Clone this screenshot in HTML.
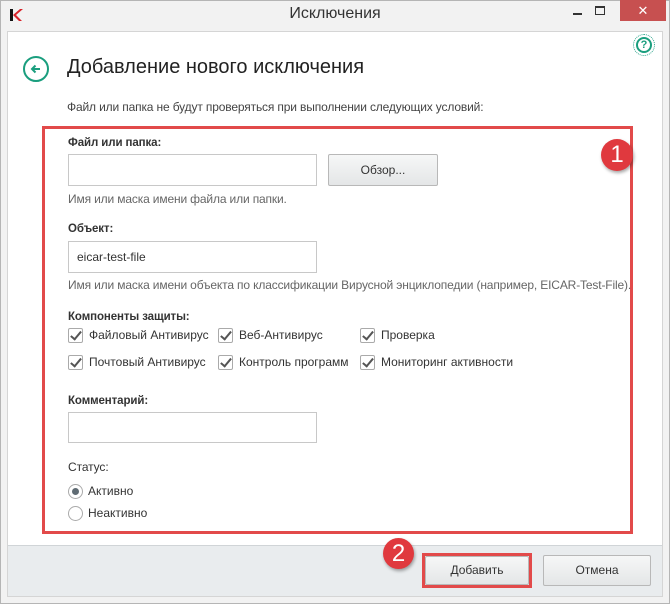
<!DOCTYPE html>
<html><head><meta charset="utf-8"><style>
*{box-sizing:border-box;margin:0;padding:0}
body{width:670px;height:604px;background:#f3f3f3;font-family:"Segoe UI","Liberation Sans",sans-serif;color:#333;position:relative;overflow:hidden;font-size:12px}
.a{position:absolute}
.win{left:0;top:0;width:670px;height:604px;border:1px solid #b5b5b5;background:#f2f2f2}
.content{left:7px;top:31px;width:656px;height:514px;background:#fff;border:1px solid #d5d5d5;border-bottom:none}
.footer{left:7px;top:545px;width:656px;height:52px;background:#e9ecee;border:1px solid #d5d5d5;border-top:1px solid #d0d4d7}
.lbl{font-weight:bold;font-size:11.5px;color:#333;letter-spacing:-0.1px}
.hint{font-size:12px;color:#666;letter-spacing:-0.15px}
.inp{background:#fff;border:1px solid #c8c8c8;height:32px;width:249px}
.btn{border:1px solid #b8b8b8;background:linear-gradient(#f6f7f7,#e4e6e7);text-align:center;font-size:12px;color:#333;line-height:30px;border-radius:2px}
.cb{width:15px;height:15px;border:1px solid #aaa;background:#fff;border-radius:2px}
.cb:after{content:"";position:absolute;left:4px;top:0px;width:4px;height:9px;border:solid #555;border-width:0 2px 2px 0;transform:rotate(40deg)}
.ct{font-size:12px;color:#333}
.badge{border-radius:50%;background:#e0393e;color:#fff;text-align:center;font-size:24px;box-shadow:1px 2px 3px rgba(0,0,0,.35)}
</style></head><body>
<div class="a win"></div>
<div class="a" style="left:9px;top:8px;width:14px;height:14px">
<svg width="14" height="14"><path d="M1 1h3v12H1z" fill="#111"/><path d="M4 7L11 1h3L7 7l6 6h-3z" fill="#d8232a"/></svg></div>
<div class="a" style="left:0;top:5px;width:670px;text-align:center;font-size:16px;color:#333">Исключения</div>
<div class="a" style="left:573px;top:13px;width:9px;height:2px;background:#333"></div>
<div class="a" style="left:595px;top:6px;width:10px;height:9px;border:1px solid #333;border-top-width:2px"></div>
<div class="a" style="left:620px;top:0;width:46px;height:21px;background:#c75050;color:#fff;text-align:center;font-size:13px;line-height:21px">✕</div>
<div class="a content"></div>
<div class="a footer"></div>
<div class="a" style="left:633px;top:34px;width:22px;height:22px;border:1px dotted #2aa38a;border-radius:50%"></div>
<div class="a" style="left:636px;top:37px;width:16px;height:16px;border:2px solid #1a9e7e;border-radius:50%;color:#1a9e7e;font-weight:bold;font-size:11px;text-align:center;line-height:12px">?</div>
<div class="a" style="left:23px;top:56px;width:26px;height:26px;border:2px solid #1a9e7e;border-radius:50%"></div>
<svg class="a" style="left:28px;top:61px" width="16" height="16"><path d="M12 8H4M7.5 4.5L4 8l3.5 3.5" stroke="#1a9e7e" stroke-width="2" fill="none"/></svg>
<div class="a" style="left:67px;top:56px;font-size:20px;color:#222">Добавление нового исключения</div>
<div class="a hint" style="left:67px;top:100px;color:#444">Файл или папка не будут проверяться при выполнении следующих условий:</div>
<div class="a" style="left:42px;top:126px;width:591px;height:408px;border:3px solid #e24a4a"></div>
<div class="a lbl" style="left:68px;top:137px">Файл или папка:</div>
<div class="a inp" style="left:68px;top:154px"></div>
<div class="a btn" style="left:328px;top:154px;width:110px;height:32px">Обзор...</div>
<div class="a hint" style="left:68px;top:192px">Имя или маска имени файла или папки.</div>
<div class="a lbl" style="left:68px;top:223px">Объект:</div>
<div class="a inp" style="left:68px;top:241px;padding:8px 0 0 8px;font-size:12px">eicar-test-file</div>
<div class="a hint" style="left:68px;top:278px">Имя или маска имени объекта по классификации Вирусной энциклопедии (например, EICAR-Test-File).</div>
<div class="a lbl" style="left:68px;top:311px">Компоненты защиты:</div>
<div class="a cb" style="left:68px;top:328px"></div><div class="a ct" style="left:89px;top:328px">Файловый Антивирус</div>
<div class="a cb" style="left:218px;top:328px"></div><div class="a ct" style="left:239px;top:328px">Веб-Антивирус</div>
<div class="a cb" style="left:360px;top:328px"></div><div class="a ct" style="left:381px;top:328px">Проверка</div>
<div class="a cb" style="left:68px;top:355px"></div><div class="a ct" style="left:89px;top:355px">Почтовый Антивирус</div>
<div class="a cb" style="left:218px;top:355px"></div><div class="a ct" style="left:239px;top:355px">Контроль программ</div>
<div class="a cb" style="left:360px;top:355px"></div><div class="a ct" style="left:381px;top:355px">Мониторинг активности</div>
<div class="a lbl" style="left:68px;top:395px">Комментарий:</div>
<div class="a inp" style="left:68px;top:412px;height:31px"></div>
<div class="a lbl" style="left:68px;top:460px;font-weight:normal;color:#333;font-size:12px">Статус:</div>
<div class="a" style="left:68px;top:484px;width:15px;height:15px;border:1px solid #aaa;border-radius:50%"></div>
<div class="a" style="left:72px;top:488px;width:7px;height:7px;background:#5f6b73;border-radius:50%"></div>
<div class="a ct" style="left:88px;top:484px">Активно</div>
<div class="a" style="left:68px;top:506px;width:15px;height:15px;border:1px solid #aaa;border-radius:50%"></div>
<div class="a ct" style="left:88px;top:506px">Неактивно</div>
<div class="a badge" style="left:601px;top:139px;width:32px;height:32px;line-height:32px">1</div>
<div class="a badge" style="left:383px;top:538px;width:31px;height:31px;line-height:31px">2</div>
<div class="a btn" style="left:425px;top:556px;width:104px;height:29px;line-height:27px">Добавить</div>
<div class="a" style="left:422px;top:553px;width:110px;height:35px;border:3px solid #e24a4a"></div>
<div class="a btn" style="left:543px;top:555px;width:108px;height:31px;line-height:29px">Отмена</div>
</body></html>
